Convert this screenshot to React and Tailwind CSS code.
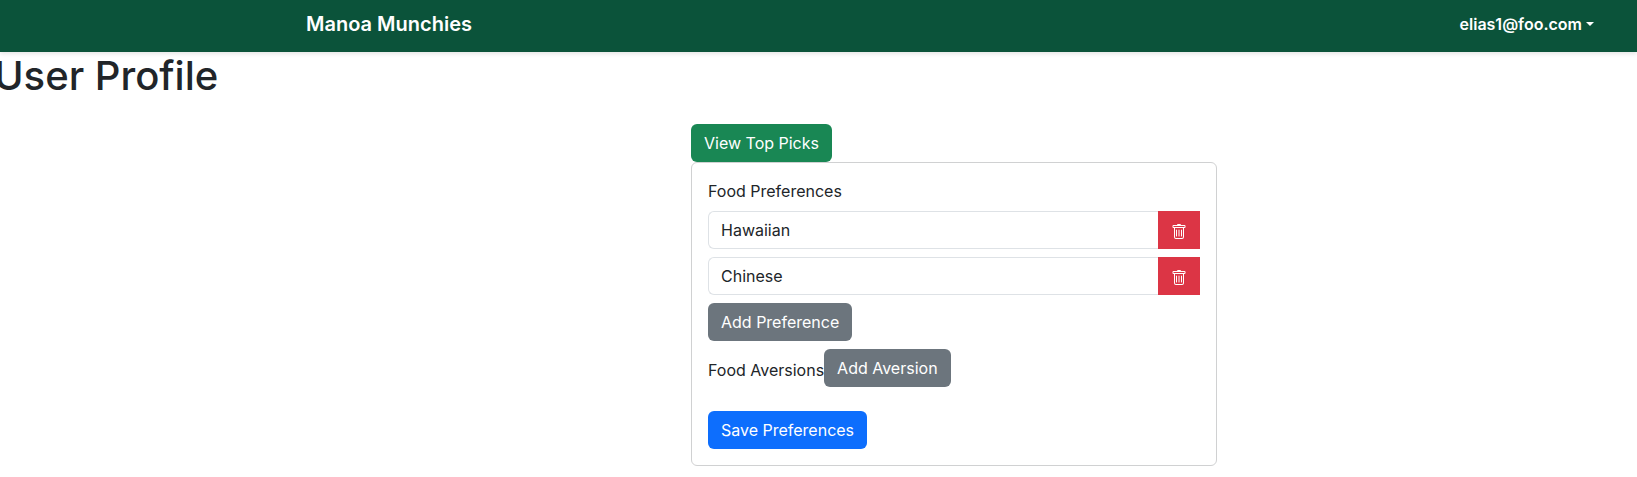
import { BsTrash } from "react-icons/bs";

function Button({ className, children }) {
  return (
    <button className={`h-[38px] shrink-0 whitespace-nowrap rounded-md px-[13px] text-base font-normal text-white ${className}`}>
      {children}
    </button>
  );
}

function PreferenceRow({ value }) {
  return (
    <div className="mb-2 flex h-[38px]">
      <input
        className="min-w-0 flex-1 rounded-l-md border border-r-0 border-[#dee2e6] bg-white px-3 text-base text-[#212529] outline-none"
        defaultValue={value}
      />
      <button className="flex w-[42px] items-center justify-center bg-[#dc3545] pt-[4px] text-white" aria-label="Remove">
        <BsTrash size={16} />
      </button>
    </div>
  );
}

export default function App() {
  return (
    <div className="h-[477px] overflow-hidden bg-white font-['Inter',sans-serif] text-base text-[#212529]">
      <nav className="flex h-[52px] items-center justify-between bg-[#0b533a] pr-[43px] pb-1 pl-[306px] text-white shadow-[0_2px_4px_rgba(0,0,0,0.1)]">
        <span className="text-xl font-semibold">Manoa Munchies</span>
        <span className="flex items-center font-semibold">
          elias1@foo.com
          <span className="ml-1 border-x-[4.8px] border-t-[4.8px] border-x-transparent border-t-white" />
        </span>
      </nav>
      <h1 className="-ml-1.5 h-[72px] text-[40px] leading-[48px] font-medium">User Profile</h1>
      <main className="ml-[691px] w-[526px]">
        <Button className="block bg-[#198754]">View Top Picks</Button>
        <section className="h-[304px] rounded-md border border-[#d0d1d2] p-4">
          <div className="mb-2 h-6">Food Preferences</div>
          <PreferenceRow value="Hawaiian" />
          <PreferenceRow value="Chinese" />
          <Button className="mb-2 block bg-[#6c757d]">Add Preference</Button>
          <div className="mb-6 flex h-[38px]">
            <span className="pt-[9px]">Food Aversions</span>
            <Button className="bg-[#6c757d]">Add Aversion</Button>
          </div>
          <Button className="block bg-[#0d6efd]">Save Preferences</Button>
        </section>
      </main>
    </div>
  );
}
